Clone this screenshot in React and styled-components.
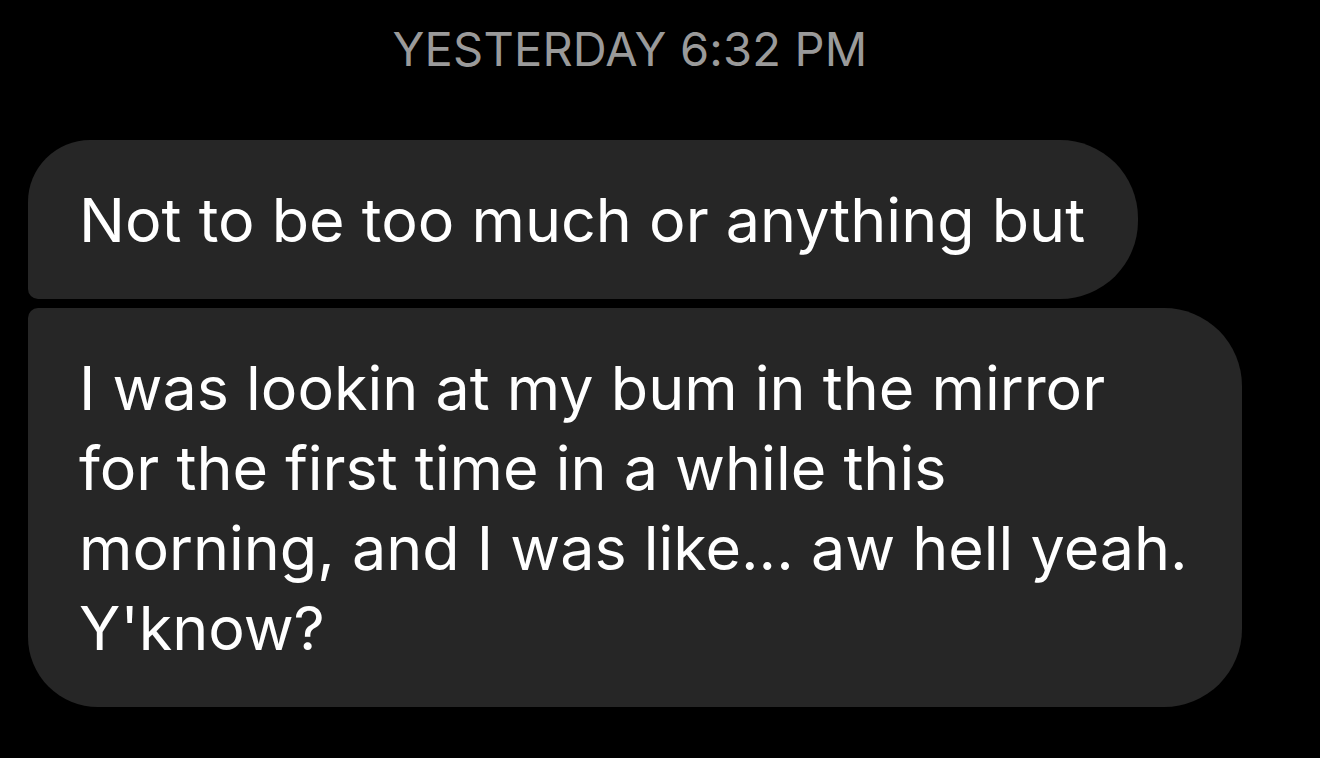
import React from "react";
import styled, { createGlobalStyle } from "styled-components";

const Global = createGlobalStyle`
  html, body { margin: 0; padding: 0; background: #000; }
  body { font-family: Inter, "Liberation Sans", sans-serif; -webkit-font-smoothing: antialiased; }
`;

const Screen = styled.div`
  width: 1320px;
  height: 758px;
  background: #000;
  display: flex;
  flex-direction: column;
  overflow: hidden;
`;

const Timestamp = styled.div`
  align-self: center;
  margin: 21px 60px 0 0;
  color: #9a9a9a;
  font-size: 47px;
  line-height: 56px;
  letter-spacing: 0.2px;
`;

const Thread = styled.div`
  display: flex;
  flex-direction: column;
  align-items: flex-start;
  gap: 9px;
  padding: 63px 0 0 28px;
`;

const Bubble = styled.div`
  box-sizing: border-box;
  background: #262626;
  color: #fff;
  font-size: 61px;
  line-height: 80px;
  padding: 40px 53px 39px 51px;
  white-space: nowrap;
  width: ${(p) => p.$width || "auto"};
  border-radius: ${(p) => (p.$first ? "62px 78px 78px 10px" : "10px 78px 78px 70px")};
`;

export default function App() {
  return (
    <>
      <Global />
      <Screen>
        <Timestamp>YESTERDAY 6:32 PM</Timestamp>
        <Thread>
          <Bubble $first>Not to be too much or anything but</Bubble>
          <Bubble $width="1214px">
            I was lookin at my bum in the mirror
            <br />
            for the first time in a while this
            <br />
            morning, and I was like... aw hell yeah.
            <br />
            Y'know?
          </Bubble>
        </Thread>
      </Screen>
    </>
  );
}
